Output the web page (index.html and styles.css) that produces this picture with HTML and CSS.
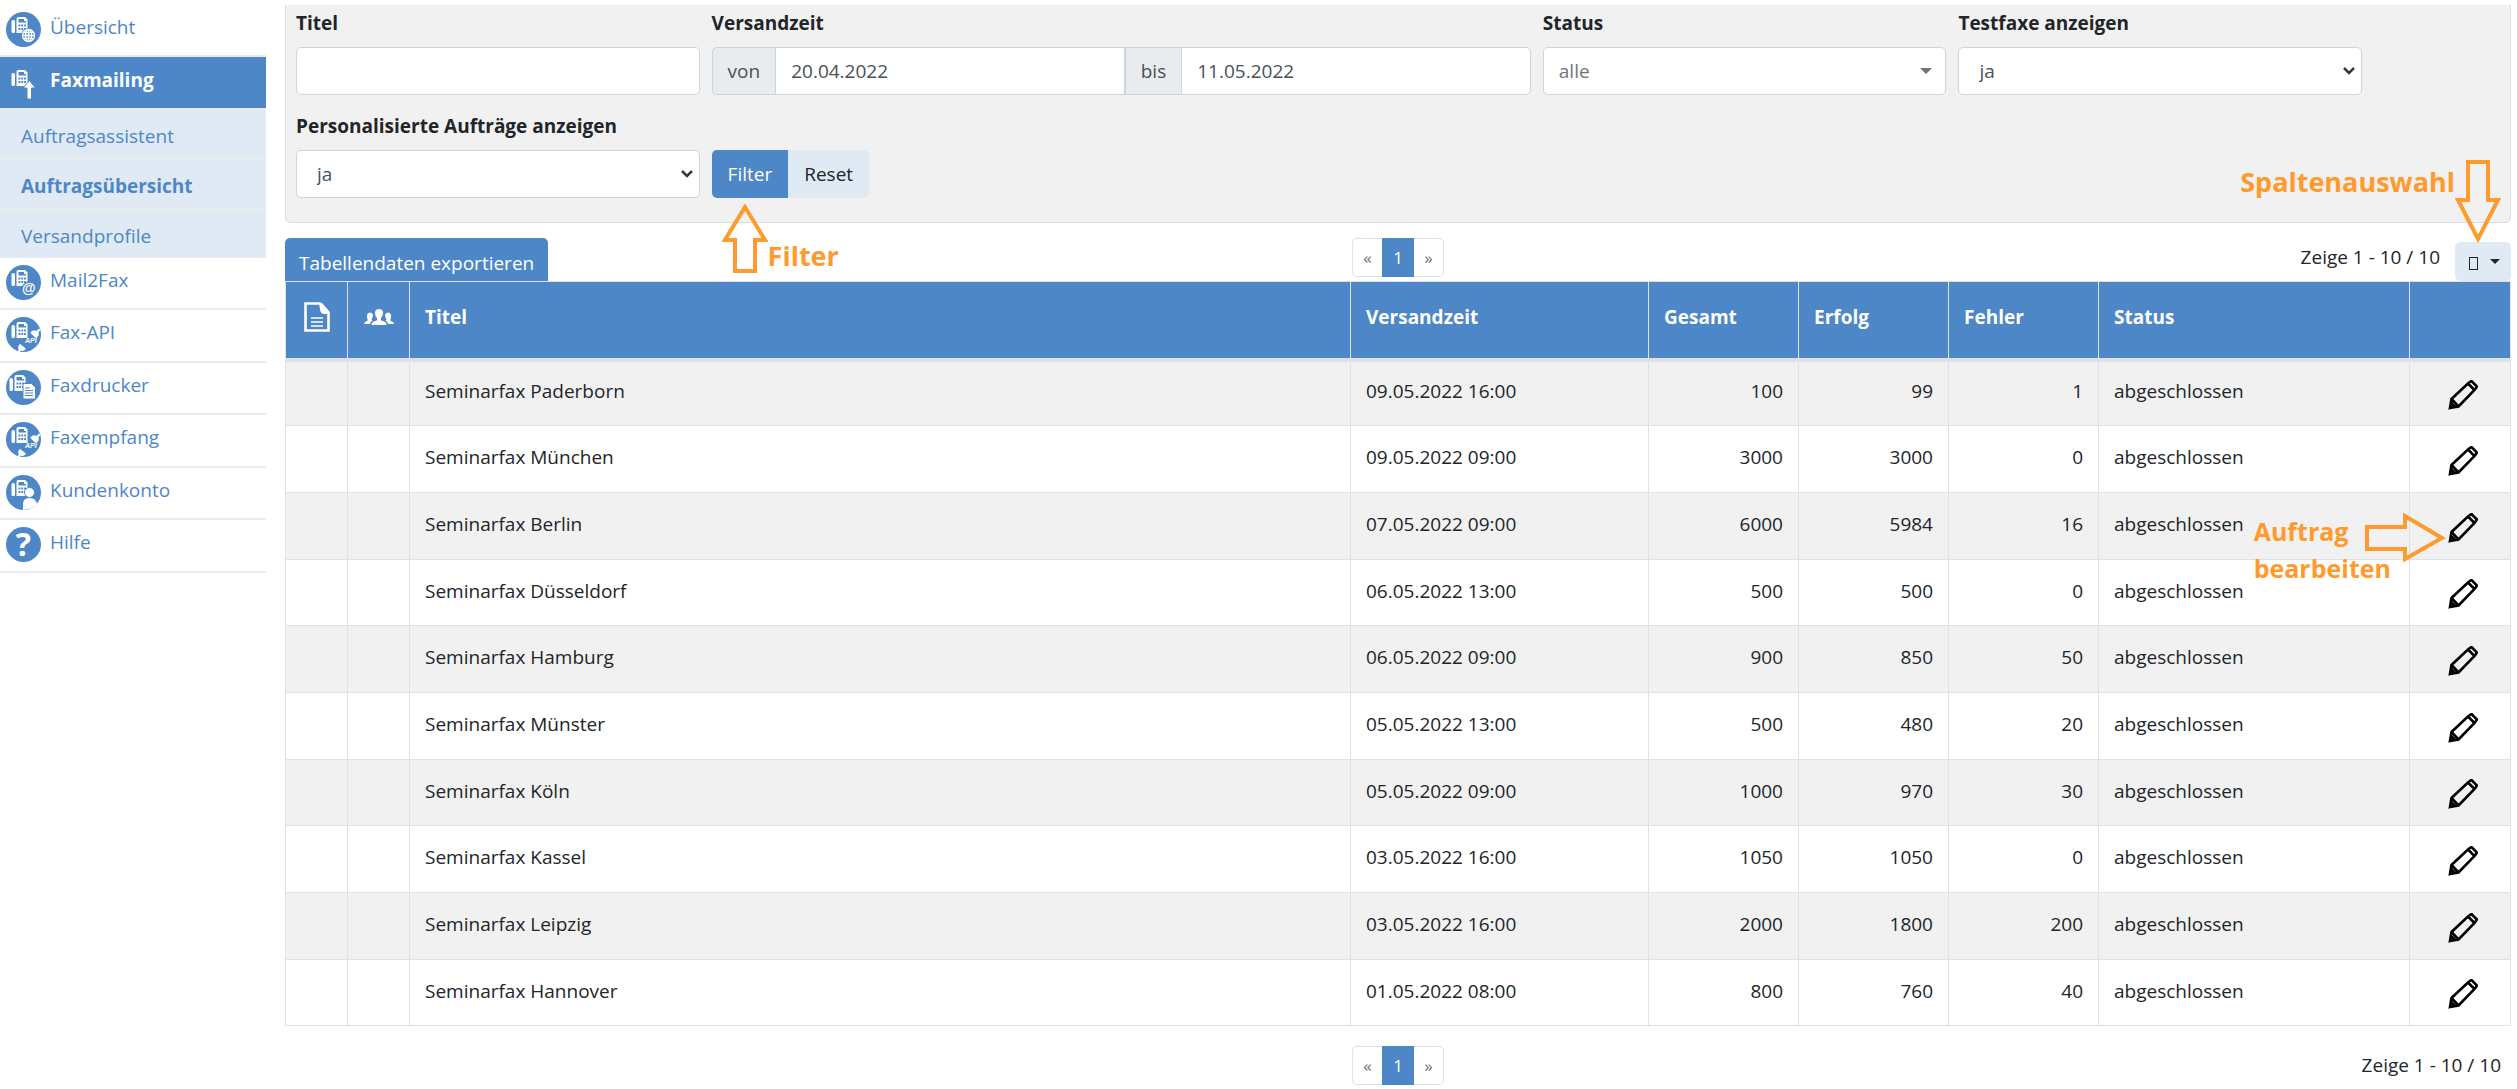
FILE: index.html
```html
<!DOCTYPE html>
<html lang="de">
	<head>
		<title>Auftragsübersicht | Faxmailing</title>
		<meta charset="UTF-8">
		<meta name="viewport" content="width=device-width, initial-scale=1">
		<link rel="stylesheet" href="styles.css">
	</head>
	<body>
		<svg class="defs" width="0" height="0">
			<symbol id="fax" viewBox="0 0 35 35">
				<rect x="5.500" y="8" width="3.500" height="13" rx="1.500" fill="#fff"/>
				<path d="M10.500 21V7q0-2 2-2h6.500l2.500 2.500V21z" fill="#fff"/>
				<path d="M12.500 7h5.500v2h2v1.500h-7.500z" fill="#4d87c7"/>
				<path d="M12.500 13.500h7.500M12.500 17h7.500" stroke="#4d87c7" stroke-width="1.800" stroke-dasharray="1.900 .9"/>
			</symbol>
			<symbol id="plug" viewBox="0 0 35 35">
				<path d="M24.500 16c1-2.500 4-3.500 6-2l2.500-2.500 1.500 1-2 3c1 2.500-.5 5-3 5.500z" fill="#fff"/>
				<path d="M14 27l6 4.500c-1 2-3 3-5 2l-1.500 1.500h-1.500l.5-3c-.8-2 0-4 1.500-5z" fill="#fff"/>
			</symbol>
			<symbol id="pencil" viewBox="0 0 30 30">
				<path d="M2 28l1.500-9L20.500 3l3-2L29 6.500l-2 3L10.500 26.500zM3.500 19l7 7.500M20 3.500l6.500 6.500M2 28l5-1-4-4z" fill="none" stroke="#000" stroke-width="2.600"/>
			</symbol>
		</svg>

		<div id="layout">
			<nav id="menu">
				<ul>
					<li><a href="#"><svg class="icon" viewBox="0 0 35 35"><circle cx="17.500" cy="17.500" r="17.500" fill="#4d87c7"/><use href="#fax"/><circle cx="22.500" cy="23.500" r="7.500" fill="#4d87c7"/><g fill="none" stroke="#fff" stroke-width="1.300"><circle cx="22.500" cy="23.500" r="6"/><ellipse cx="22.500" cy="23.500" rx="3" ry="6"/><path d="M16.500 23.500h12M22.500 17.500v12M17.500 20.500h10M17.500 26.500h10"/></g></svg>Übersicht</a></li>
					<li class="active"><a href="#"><svg class="icon" viewBox="0 0 35 35"><use href="#fax"/><path d="M23.500 15.500l6 7.500h-4v11h-4.500V23h-4z" fill="#fff" stroke="#4d87c7"/></svg>Faxmailing</a>
						<ul>
							<li><a href="#">Auftragsassistent</a></li>
							<li class="current"><a href="#">Auftragsübersicht</a></li>
							<li><a href="#">Versandprofile</a></li>
						</ul>
					</li>
					<li><a href="#"><svg class="icon" viewBox="0 0 35 35"><circle cx="17.500" cy="17.500" r="17.500" fill="#4d87c7"/><use href="#fax"/><circle cx="23" cy="24" r="7.500" fill="#4d87c7"/><text x="16" y="28" class="icon-at">@</text></svg>Mail2Fax</a></li>
					<li><a href="#"><svg class="icon" viewBox="0 0 35 35"><circle cx="17.500" cy="17.500" r="17.500" fill="#4d87c7"/><use href="#fax"/><use href="#plug"/><text x="19" y="26" class="icon-api">API</text></svg>Fax-API</a></li>
					<li><a href="#"><svg class="icon" viewBox="0 0 35 35"><circle cx="17.500" cy="17.500" r="17.500" fill="#4d87c7"/><use href="#fax" x="-2"/><path d="M17 13.500h8.500l4 4V29H17z" fill="#fff" stroke="#4d87c7"/><path d="M19 18h5M19 20.500h8M19 23h8M19 25.500h8" stroke="#4d87c7"/></svg>Faxdrucker</a></li>
					<li><a href="#"><svg class="icon" viewBox="0 0 35 35"><circle cx="17.500" cy="17.500" r="17.500" fill="#4d87c7"/><use href="#fax"/><use href="#plug"/><text x="19" y="26" class="icon-api">API</text></svg>Faxempfang</a></li>
					<li><a href="#"><svg class="icon" viewBox="0 0 35 35"><circle cx="17.500" cy="17.500" r="17.500" fill="#4d87c7"/><use href="#fax"/><circle cx="23.500" cy="17.500" r="5" fill="#fff" stroke="#4d87c7"/><path d="M17 35v-6q0-6 6.500-6t7.500 6q-5 5.500-14 6z" fill="#fff"/></svg>Kundenkonto</a></li>
					<li><a href="#"><svg class="icon" viewBox="0 0 35 35"><circle cx="17.500" cy="17.500" r="17.500" fill="#4d87c7"/><text x="17.500" y="29" class="icon-help">?</text></svg>Hilfe</a></li>
				</ul>
			</nav>

			<div id="page">
				<form id="filter">
					<div class="field">
						<label for="titel">Titel</label>
						<input type="text" id="titel" name="titel">
					</div>
					<div class="field wide">
						<label for="von">Versandzeit</label>
						<div class="range">
							<label class="addon" for="von">von</label>
							<input type="text" id="von" name="von" value="20.04.2022">
							<label class="addon" for="bis">bis</label>
							<input type="text" id="bis" name="bis" value="11.05.2022">
						</div>
					</div>
					<div class="field">
						<label for="status">Status</label>
						<select id="status" name="status" class="caret"><option>alle</option></select>
					</div>
					<div class="field">
						<label for="testfaxe">Testfaxe anzeigen</label>
						<select id="testfaxe" name="testfaxe"><option>ja</option><option>nein</option></select>
					</div>
					<div class="field">
						<label for="personalisiert">Personalisierte Aufträge anzeigen</label>
						<select id="personalisiert" name="personalisiert"><option>ja</option><option>nein</option></select>
					</div>
					<div class="buttons">
						<button type="submit" class="primary">Filter</button><button type="reset">Reset</button>
						<div class="hint hint-filter">
							<svg width="46" height="70" viewBox="0 0 46 70"><path d="M23 3L43 36H33V67H13V36H3z"/></svg>
							<span>Filter</span>
						</div>
					</div>
				</form>

				<div class="toolbar">
					<button type="button" class="export">Tabellendaten exportieren</button>
					<div class="pager">
						<a href="#">«</a><a href="#" class="on">1</a><a href="#">»</a>
					</div>
					<div class="count">
						<span>Zeige 1 - 10 / 10</span>
						<button type="button" class="columns" aria-label="Spaltenauswahl"><i class="box"></i><i class="arrow"></i></button>
						<div class="hint hint-columns">
							<span>Spaltenauswahl</span>
							<svg width="46" height="84" viewBox="0 0 46 84"><path d="M13 3H33V41H43L23 80L3 41H13z"/></svg>
						</div>
					</div>
				</div>

				<table>
					<colgroup>
						<col class="c-icon"><col class="c-icon"><col><col class="c-time"><col class="c-num"><col class="c-num"><col class="c-num"><col class="c-status"><col class="c-edit">
					</colgroup>
					<thead>
						<tr>
							<th><svg width="26" height="30" viewBox="0 0 26 30"><path d="M1.500 1.500h14.500l8.500 9v18h-23z" fill="none" stroke="#fff" stroke-width="2.600"/><path d="M15 1h3l7 8v3h-4q-5 0-5-5z" fill="#fff"/><path d="M7 16h12M7 20h12M7 24h12" stroke="#fff" stroke-width="1.300"/></svg></th>
							<th><svg width="30" height="16" viewBox="0 0 30 16" fill="#fff"><path d="M7.500 16q0-3 3-3.800l2.500-1V9q-2-2-2-5 0-4 4-4t4 4q0 3-2 5v2.200l2.500 1q3 .8 3 3.800z"/><path d="M0 15q0-2 2-2.600l1.500-.7V10Q2.500 8 3 6q.5-2.500 3-2.500T9 6q0 2-1.500 4.500l1 1q-2.500 1-2.500 3.500zM30 15q0-2-2-2.600l-1.500-.7V10q1-2 .5-4-.5-2.500-3-2.500T21 6q0 2 1.500 4.500l-1 1q2.500 1 2.500 3.500z"/></svg></th>
							<th>Titel</th><th>Versandzeit</th><th>Gesamt</th><th>Erfolg</th><th>Fehler</th><th>Status</th><th></th>
						</tr>
					</thead>
					<tbody>
						<tr><td></td><td></td><td>Seminarfax Paderborn</td><td>09.05.2022 16:00</td><td class="num">100</td><td class="num">99</td><td class="num">1</td><td>abgeschlossen</td><td class="edit"><a href="#" title="Auftrag bearbeiten"><svg><use href="#pencil"/></svg></a></td></tr>
						<tr><td></td><td></td><td>Seminarfax München</td><td>09.05.2022 09:00</td><td class="num">3000</td><td class="num">3000</td><td class="num">0</td><td>abgeschlossen</td><td class="edit"><a href="#" title="Auftrag bearbeiten"><svg><use href="#pencil"/></svg></a></td></tr>
						<tr><td></td><td></td><td>Seminarfax Berlin</td><td>07.05.2022 09:00</td><td class="num">6000</td><td class="num">5984</td><td class="num">16</td><td>abgeschlossen</td><td class="edit"><a href="#" title="Auftrag bearbeiten"><svg><use href="#pencil"/></svg></a>
							<div class="hint hint-edit">
								<span>Auftrag<br>bearbeiten</span>
								<svg width="82" height="50" viewBox="0 0 82 50"><path d="M3 14H41V3L78 25L41 46V36H3z"/></svg>
							</div></td></tr>
						<tr><td></td><td></td><td>Seminarfax Düsseldorf</td><td>06.05.2022 13:00</td><td class="num">500</td><td class="num">500</td><td class="num">0</td><td>abgeschlossen</td><td class="edit"><a href="#" title="Auftrag bearbeiten"><svg><use href="#pencil"/></svg></a></td></tr>
						<tr><td></td><td></td><td>Seminarfax Hamburg</td><td>06.05.2022 09:00</td><td class="num">900</td><td class="num">850</td><td class="num">50</td><td>abgeschlossen</td><td class="edit"><a href="#" title="Auftrag bearbeiten"><svg><use href="#pencil"/></svg></a></td></tr>
						<tr><td></td><td></td><td>Seminarfax Münster</td><td>05.05.2022 13:00</td><td class="num">500</td><td class="num">480</td><td class="num">20</td><td>abgeschlossen</td><td class="edit"><a href="#" title="Auftrag bearbeiten"><svg><use href="#pencil"/></svg></a></td></tr>
						<tr><td></td><td></td><td>Seminarfax Köln</td><td>05.05.2022 09:00</td><td class="num">1000</td><td class="num">970</td><td class="num">30</td><td>abgeschlossen</td><td class="edit"><a href="#" title="Auftrag bearbeiten"><svg><use href="#pencil"/></svg></a></td></tr>
						<tr><td></td><td></td><td>Seminarfax Kassel</td><td>03.05.2022 16:00</td><td class="num">1050</td><td class="num">1050</td><td class="num">0</td><td>abgeschlossen</td><td class="edit"><a href="#" title="Auftrag bearbeiten"><svg><use href="#pencil"/></svg></a></td></tr>
						<tr><td></td><td></td><td>Seminarfax Leipzig</td><td>03.05.2022 16:00</td><td class="num">2000</td><td class="num">1800</td><td class="num">200</td><td>abgeschlossen</td><td class="edit"><a href="#" title="Auftrag bearbeiten"><svg><use href="#pencil"/></svg></a></td></tr>
						<tr><td></td><td></td><td>Seminarfax Hannover</td><td>01.05.2022 08:00</td><td class="num">800</td><td class="num">760</td><td class="num">40</td><td>abgeschlossen</td><td class="edit"><a href="#" title="Auftrag bearbeiten"><svg><use href="#pencil"/></svg></a></td></tr>
					</tbody>
				</table>

				<div class="toolbar bottom">
					<span></span>
					<div class="pager">
						<a href="#">«</a><a href="#" class="on">1</a><a href="#">»</a>
					</div>
					<div class="count"><span>Zeige 1 - 10 / 10</span></div>
				</div>
			</div>
		</div>
	</body>
</html>
```
FILE: styles.css
```css
* {
	box-sizing: border-box;
}

html, body {
	margin: 0;
	padding: 0;
}

body, input, select, button {
	font-family: 'Open Sans', 'Noto Sans', sans-serif;
	font-size: 19px;
	line-height: 30px;
	color: #212529;
}

.defs {
	position: absolute;
}

#layout {
	display: flex;
	gap: 19px;
	padding: 5px 6px 0 0;
}

/* Menu */

#menu {
	flex: 0 0 266px;
}

#menu ul {
	list-style: none;
	margin: 0;
	padding: 0;
}

#menu a {
	display: flex;
	align-items: flex-start;
	gap: 9px;
	height: 51px;
	padding: 7px 6px;
	color: #4d87c7;
	text-decoration: none;
}

#menu > ul > li {
	border-bottom: 2px solid #ebebeb;
}

#menu > ul > li:nth-child(odd) > a {
	height: 50px;
}

#menu > ul > li.active {
	border-bottom: 0;
}

#menu .active > a {
	padding-top: 8px;
	background-color: #4d87c7;
	color: #fff;
	font-weight: bold;
}

#menu .active li {
	background-color: #e0eaf5;
	border-top: 2px solid #ebebeb;
}

#menu .active li a {
	height: 48px;
	padding: 11px 21px;
}

.icon {
	flex: none;
	width: 35px;
	height: 35px;
	overflow: visible;
}

#menu .current a {
	font-weight: bold;
}

.icon-at {
	font: bold 14px 'Liberation Sans', sans-serif;
	fill: #fff;
}

.icon-api {
	font: italic bold 7px 'Liberation Sans', sans-serif;
	fill: #fff;
}

.icon-help {
	font: bold 32px 'Open Sans', sans-serif;
	text-anchor: middle;
	fill: #fff;
}

/* Filter */

#page {
	flex: 1;
	min-width: 0;
}

#filter {
	display: grid;
	grid-template-columns: repeat(5, minmax(0, 1fr));
	gap: 16px 12px;
	padding: 3px 148px 24px 10px;
	background-color: #f1f1f1;
	border: 1px solid #dcdee0;
	border-top: 0;
	border-radius: 0 0 5px 5px;
}

.field > label {
	display: block;
	margin-bottom: 9px;
	font-weight: bold;
}

.wide {
	grid-column: span 2;
}

input, select {
	width: 100%;
	height: 48px;
	padding: 0 15px;
	background-color: #fff;
	border: 1px solid #ced4da;
	border-radius: 5px;
	color: #495057;
}

select {
	appearance: none;
	padding: 0 20px;
	background: #fff url("data:image/svg+xml,%3Csvg xmlns='http://www.w3.org/2000/svg' width='12' height='8'%3E%3Cpath d='M1 1l5 5 5-5' fill='none' stroke='%23343a40' stroke-width='2.500'/%3E%3C/svg%3E") no-repeat right 6px center;
}

select.caret {
	padding: 0 15px;
	background-image: url("data:image/svg+xml,%3Csvg xmlns='http://www.w3.org/2000/svg' width='12' height='6'%3E%3Cpath d='M0 0h12L6 6z' fill='%236c757d'/%3E%3C/svg%3E");
	background-position: right 13px center;
	color: #6c757d;
}

.range {
	display: flex;
}

.range input {
	flex: 1;
	min-width: 0;
	border-radius: 0;
}

.range input:last-child {
	border-radius: 0 5px 5px 0;
}

.addon {
	padding: 8px 15px;
	background-color: #e9ecef;
	border: 1px solid #ced4da;
	border-right: 0;
	color: #495057;
}

.addon:first-child {
	border-radius: 5px 0 0 5px;
}

button {
	height: 48px;
	padding: 0 16px;
	background-color: #e0eaf5;
	border: 0;
	border-radius: 0 5px 5px 0;
}

button.primary, button.export {
	background-color: #4d87c7;
	color: #fff;
}

button.primary {
	border-radius: 5px 0 0 5px;
}

.buttons {
	position: relative;
	display: flex;
	align-self: end;
}

/* Toolbar */

.toolbar {
	display: grid;
	grid-template-columns: 1fr auto 1fr;
	align-items: start;
	padding-top: 15px;
}

.toolbar.bottom {
	padding-top: 20px;
}

button.export {
	justify-self: start;
	height: 43px;
	padding: 6px 14px 0;
	border-radius: 5px 5px 0 0;
}

.pager {
	display: flex;
}

.pager a {
	width: 30px;
	height: 39px;
	border: 1px solid #dee2e6;
	font-size: 17px;
	line-height: 38px;
	text-align: center;
	text-decoration: none;
	color: #6c757d;
}

.pager a:first-child {
	border-right: 0;
	border-radius: 5px 0 0 5px;
}

.pager a:last-child {
	border-left: 0;
	border-radius: 0 5px 5px 0;
}

.pager a.on {
	width: 32px;
	background-color: #4d87c7;
	border-color: #4d87c7;
	color: #fff;
}

.count {
	position: relative;
	display: flex;
	justify-content: flex-end;
	gap: 15px;
	padding-top: 4px;
}

.bottom .count {
	padding-right: 10px;
}

button.columns {
	display: flex;
	align-items: center;
	gap: 12px;
	width: 56px;
	height: 39px;
	padding: 0 11px 0 14px;
	border-radius: 5px;
}

.box {
	width: 9px;
	height: 13px;
	margin-top: 4px;
	border: 1px solid #212529;
}

.arrow {
	border: 5px solid transparent;
	border-top-color: #212529;
	border-bottom: 0;
}

/* Table */

table {
	width: 100%;
	table-layout: fixed;
	border-collapse: collapse;
}

.c-icon {
	width: 62px;
}

.c-time {
	width: 298px;
}

.c-num {
	width: 150px;
}

.c-status {
	width: 311px;
}

.c-edit {
	width: 101px;
}

th, td {
	height: 67px;
	padding: 0 15px 4px;
	border: 1px solid #dee2e6;
	text-align: left;
}

th {
	height: 78px;
	padding-bottom: 6px;
	background-color: #4d87c7;
	border-bottom: 4px solid #dee2e6;
	color: #fff;
}

th svg {
	display: block;
	margin: 0 auto;
}

tbody tr:nth-child(odd) {
	background-color: #f1f1f1;
}

tbody tr:nth-child(3n+1) td {
	height: 66px;
}

td.num {
	text-align: right;
}

td.edit {
	position: relative;
	padding: 3px 0 0 6px;
	text-align: center;
}

.edit a svg {
	display: block;
	width: 30px;
	height: 30px;
	margin: 0 auto;
}

/* Hints */

.hint {
	position: absolute;
	display: flex;
	font-size: 27px;
	font-weight: bold;
	line-height: 37px;
	text-align: left;
	white-space: nowrap;
	color: #ff9a2e;
}

.hint path {
	fill: none;
	stroke: #ff9a2e;
	stroke-width: 4px;
}

.hint-filter {
	top: 54px;
	left: 10px;
	align-items: flex-end;
}

.hint-columns {
	right: 10px;
	bottom: 38px;
}

.hint-columns span {
	padding-top: 4px;
}

.hint-edit {
	top: 20px;
	right: 64px;
	font-size: 25px;
}

/* second line runs on below the arrow */
.hint-edit svg {
	margin-left: -27px;
}
```
